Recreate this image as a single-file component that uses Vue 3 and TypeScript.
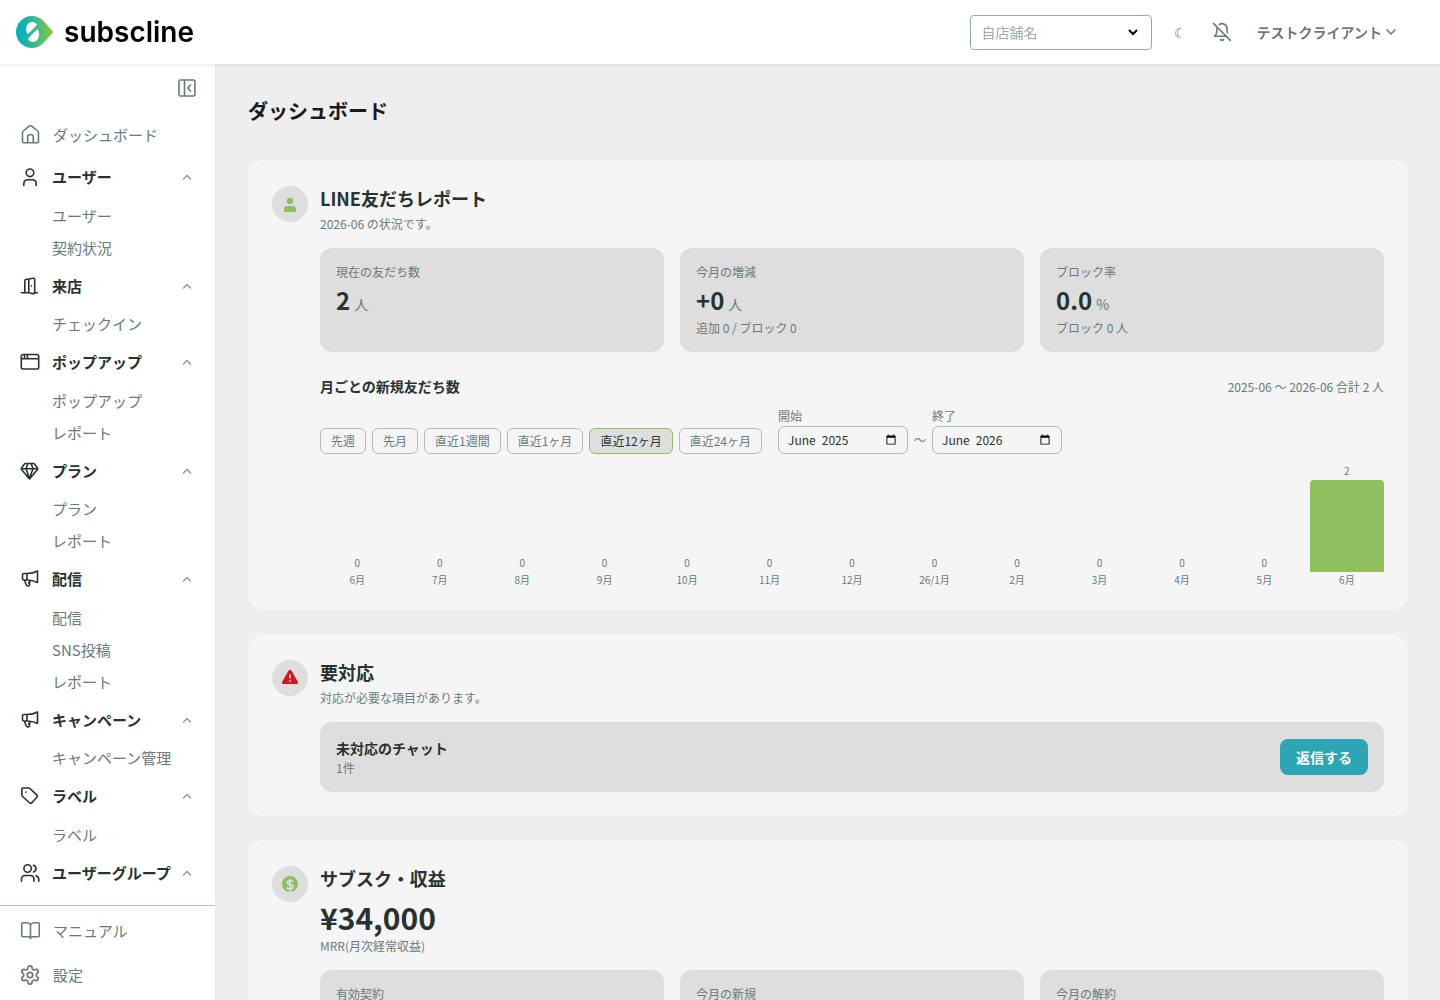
<script setup lang="ts">
import { ref, computed } from 'vue'

interface NavGroup {
  label: string
  icon: string
  children: string[]
}

const megaphone =
  'M7 4.500H4Q2.500 4.500 2.500 6V9.500Q2.500 11 4 11H7M7 4.500V11M7 4.500Q13 4.500 17.500 2V13.500Q13 11 7 11M4.500 11L6 15.500Q6.500 17 8 17Q9.800 17 9.500 15.200L8.600 13.800L10 13.200L9.200 11.400'

const icons: Record<string, string> = {
  home: 'M2.500 7.700Q2.500 6.700 3.300 6L9.200 1.200Q10.500 .300 11.800 1.200L17.700 6Q18.500 6.700 18.500 7.700V16Q18.500 17.700 16.800 17.700H4.200Q2.500 17.700 2.500 16ZM7.700 17.500V11.500Q7.700 9.700 9.500 9.700H11.500Q13.300 9.700 13.300 11.500V17.500',
  user: 'M13.800 5.800a3.800 3.800 0 1 1-7.600 0a3.800 3.800 0 0 1 7.600 0M3.800 18.500V17Q3.800 12.800 8 12.800H12Q16.200 12.800 16.200 17V18.500',
  door: 'M1.500 16.700H9M4.800 16.700V5Q4.800 3.300 6.500 3.300H8.800M8.800 4.200Q8.800 3 10 2.700L13 2.200Q14.700 2 14.700 3.700V16Q14.700 17.800 13 17.600L10.300 17.200Q8.800 17 8.800 15.500ZM14.700 16.700H17.300M11.500 9.800V10',
  window: 'M3 2.500H17Q18.700 2.500 18.700 4.200V15.300Q18.700 17 17 17H3Q1.300 17 1.300 15.300V4.200Q1.300 2.500 3 2.500ZM1.300 6.700H18.700M4.500 2.500V6.700M7.500 2.500V6.700',
  diamond: 'M5.500 2.500H13.500Q14.300 2.500 14.800 3.200L17.600 7.200Q17.900 7.800 17.500 8.500L9.500 18L1.500 8.500Q1.100 7.800 1.500 7.200L4.200 3.200Q4.700 2.500 5.500 2.500ZM1.500 7.800H17.500M7.800 2.500L6 7.800L9.500 17.500L13 7.800L11.200 2.500',
  megaphone,
  tag: 'M3 2H8.500Q9.500 2 10.200 2.700L17.100 9.400Q17.800 10.200 17.100 11L11.500 17Q10.700 17.800 9.800 17L2.600 10.500Q1.800 9.800 1.800 8.800V3.200Q1.800 2 3 2ZM6 6V6.200',
  users: 'M11.300 5.500a3.700 3.700 0 1 1-7.400 0a3.700 3.700 0 0 1 7.400 0M1.500 18.200V16.500Q1.500 12.500 5.500 12.500H10Q14 12.500 14 16.500V18.200M13.500 2.200Q16 3 16 5.500Q16 8 13.500 9M16 12.700Q18.800 13.700 18.800 16.500V18.200',
  book: 'M10.500 4Q9.500 1.800 7 1.800H3Q1.700 1.800 1.700 3.100V14.500Q1.700 15.800 3 15.800H8.500Q10.500 15.800 10.500 17.800V4Q11.500 1.800 14 1.800H18Q19.300 1.800 19.300 3.100V14.500Q19.300 15.800 18 15.800H12.500Q10.500 15.800 10.500 17.800',
}

const groups: NavGroup[] = [
  { label: 'ユーザー', icon: 'user', children: ['ユーザー', '契約状況'] },
  { label: '来店', icon: 'door', children: ['チェックイン'] },
  { label: 'ポップアップ', icon: 'window', children: ['ポップアップ', 'レポート'] },
  { label: 'プラン', icon: 'diamond', children: ['プラン', 'レポート'] },
  { label: '配信', icon: 'megaphone', children: ['配信', 'SNS投稿', 'レポート'] },
  { label: 'キャンペーン', icon: 'megaphone', children: ['キャンペーン管理'] },
  { label: 'ラベル', icon: 'tag', children: ['ラベル'] },
  { label: 'ユーザーグループ', icon: 'users', children: [] },
]

const friendStats = [
  { label: '現在の友だち数', value: '2', unit: '人', note: '' },
  { label: '今月の増減', value: '+0', unit: '人', note: '追加 0 / ブロック 0' },
  { label: 'ブロック率', value: '0.0', unit: '%', note: 'ブロック 0 人' },
]

const revenueStats = ['有効契約', '今月の新規', '今月の解約']

const ranges = ['先週', '先月', '直近1週間', '直近1ヶ月', '直近12ヶ月', '直近24ヶ月']
const activeRange = ref('直近12ヶ月')
const startMonth = ref('2025-06')
const endMonth = ref('2026-06')
const store = ref('')

const monthNames = [
  'January', 'February', 'March', 'April', 'May', 'June',
  'July', 'August', 'September', 'October', 'November', 'December',
]
// Splits "2025-06" into the month name and year shown in the field.
function monthParts(value: string): string[] {
  const [year, month] = value.split('-')
  return year && month ? [monthNames[Number(month) - 1], year] : []
}

const months = [
  { label: '6月', count: 0 },
  { label: '7月', count: 0 },
  { label: '8月', count: 0 },
  { label: '9月', count: 0 },
  { label: '10月', count: 0 },
  { label: '11月', count: 0 },
  { label: '12月', count: 0 },
  { label: '26/1月', count: 0 },
  { label: '2月', count: 0 },
  { label: '3月', count: 0 },
  { label: '4月', count: 0 },
  { label: '5月', count: 0 },
  { label: '6月', count: 2 },
]
const peak = computed(() => Math.max(...months.map((m) => m.count), 1))
const barHeight = (count: number) => `${Math.round((count / peak.value) * 92)}px`
</script>

<template>
  <div class="app">
    <header class="topbar">
      <a href="#" class="logo" aria-label="subscline">
        <svg width="38" height="32" viewBox="0 0 38 32" aria-hidden="true">
          <defs>
            <linearGradient id="brand" x1="0" y1="0" x2="1" y2="0">
              <stop offset="0.1" stop-color="#00b2b8" />
              <stop offset="0.55" stop-color="#42b98a" />
              <stop offset="1" stop-color="#8cc63f" />
            </linearGradient>
          </defs>
          <path d="M16 0Q22 0 27 4.500L36.300 14.500Q37.700 16 36.300 17.500L27 27.500Q22 32 16 32A16 16 0 0 1 16 0Z" fill="url(#brand)" />
          <path d="M11.800 18.300C8.500 14.500 10 6 16 6Q19.800 6 21 9Z" fill="#fff" />
          <path d="M21.300 13.300C25 17 22.800 26 17 26Q13.300 26 12 22.600Z" fill="#fff" />
        </svg>
        <span>subscline</span>
      </a>
      <div class="tools">
        <div class="store">
          <select v-model="store" aria-label="自店舗名">
            <option value="">自店舗名</option>
          </select>
          <svg width="12" height="8" viewBox="0 0 12 8" aria-hidden="true"><path d="M2 2l4 4 4-4" /></svg>
        </div>
        <button type="button" class="tool moon" aria-label="ダークモード">☾</button>
        <button type="button" class="tool bell" aria-label="通知">
          <svg class="line scaled" width="20" height="20" viewBox="0 0 24 24">
            <path d="M8.700 3A6 6 0 0 1 18 8a21.300 21.300 0 0 0 .600 5M17 17H3s3-2 3-9a4.670 4.670 0 0 1 .300-1.700M10.300 21a1.940 1.940 0 0 0 3.400 0M2 2l20 20" />
          </svg>
        </button>
        <button type="button" class="account">
          テストクライアント
          <svg class="line" width="10" height="8" viewBox="0 0 10 8"><path d="M1 2l4 4 4-4" /></svg>
        </button>
      </div>
    </header>

    <div class="body">
      <aside class="sidebar">
        <div class="collapse">
          <button type="button" aria-label="メニューを閉じる">
            <svg class="line" width="20" height="20" viewBox="0 0 20 20">
              <path d="M3.500 2H16.500Q18 2 18 3.500V16.500Q18 18 16.500 18H3.500Q2 18 2 16.500V3.500Q2 2 3.500 2ZM7.500 2V18M13.500 7L10.800 10L13.500 13" />
            </svg>
          </button>
        </div>
        <nav class="nav">
          <a href="#" class="link home">
            <svg class="line" width="20" height="20" viewBox="0 0 20 20"><path :d="icons.home" /></svg>
            ダッシュボード
          </a>
          <section v-for="group in groups" :key="group.label">
            <button type="button" class="group" aria-expanded="true">
              <svg class="line" width="20" height="20" viewBox="0 0 20 20"><path :d="icons[group.icon]" /></svg>
              <span>{{ group.label }}</span>
              <svg class="line caret" width="10" height="8" viewBox="0 0 10 8"><path d="M1.500 6L5 2.500L8.500 6" /></svg>
            </button>
            <a v-for="child in group.children" :key="child" href="#" class="child">{{ child }}</a>
          </section>
        </nav>
        <div class="footer">
          <a href="#" class="link">
            <svg class="line" width="20" height="20" viewBox="0 0 20 20"><path :d="icons.book" /></svg>
            マニュアル
          </a>
          <a href="#" class="link">
            <svg class="line scaled" width="20" height="20" viewBox="1 1 22 22">
              <path d="M12.220 2h-.440a2 2 0 0 0-2 2v.180a2 2 0 0 1-1 1.730l-.430.250a2 2 0 0 1-2 0l-.150-.080a2 2 0 0 0-2.730.730l-.220.380a2 2 0 0 0 .730 2.730l.150.100a2 2 0 0 1 1 1.720v.510a2 2 0 0 1-1 1.740l-.150.090a2 2 0 0 0-.730 2.730l.220.380a2 2 0 0 0 2.730.730l.150-.080a2 2 0 0 1 2 0l.430.250a2 2 0 0 1 1 1.730V20a2 2 0 0 0 2 2h.440a2 2 0 0 0 2-2v-.180a2 2 0 0 1 1-1.730l.430-.250a2 2 0 0 1 2 0l.150.080a2 2 0 0 0 2.730-.730l.220-.390a2 2 0 0 0-.730-2.730l-.150-.080a2 2 0 0 1-1-1.740v-.500a2 2 0 0 1 1-1.740l.150-.090a2 2 0 0 0 .730-2.730l-.220-.380a2 2 0 0 0-2.730-.730l-.150.080a2 2 0 0 1-2 0l-.430-.250a2 2 0 0 1-1-1.730V4a2 2 0 0 0-2-2z" />
              <circle cx="12" cy="12" r="3" />
            </svg>
            設定
          </a>
        </div>
      </aside>

      <main class="main">
        <h1>ダッシュボード</h1>

        <section class="card">
          <div class="badge green">
            <svg width="20" height="20" viewBox="0 0 20 20"><circle cx="10" cy="7" r="3.200" /><path d="M4 15Q4 12 8 12H12Q16 12 16 15V17Q16 18 15 18H5Q4 18 4 17Z" /></svg>
          </div>
          <div class="content">
            <h2>LINE友だちレポート</h2>
            <p class="lead">2026-06 の状況です。</p>
            <div class="stats">
              <div v-for="stat in friendStats" :key="stat.label" class="stat">
                <p>{{ stat.label }}</p>
                <p class="value"><strong>{{ stat.value }}</strong> {{ stat.unit }}</p>
                <p v-if="stat.note">{{ stat.note }}</p>
              </div>
            </div>

            <div class="chart-head">
              <h3>月ごとの新規友だち数</h3>
              <p>2025-06 〜 2026-06 合計 2 人</p>
            </div>
            <div class="filters">
              <div class="ranges">
                <button
                  v-for="range in ranges"
                  :key="range"
                  type="button"
                  :class="{ active: range === activeRange }"
                  @click="activeRange = range"
                >{{ range }}</button>
              </div>
              <div class="period">
                <div class="field">
                  <label for="start-month">開始</label>
                  <div class="month">
                    <input id="start-month" v-model="startMonth" type="month" />
                    <div class="shown"><span v-for="part in monthParts(startMonth)" :key="part">{{ part }}</span></div>
                  </div>
                </div>
                <span class="tilde">〜</span>
                <div class="field">
                  <label for="end-month">終了</label>
                  <div class="month">
                    <input id="end-month" v-model="endMonth" type="month" />
                    <div class="shown"><span v-for="part in monthParts(endMonth)" :key="part">{{ part }}</span></div>
                  </div>
                </div>
              </div>
            </div>
            <div class="chart">
              <div v-for="(month, i) in months" :key="i" class="column">
                <span class="count">{{ month.count }}</span>
                <div class="bar" :style="{ height: barHeight(month.count) }"></div>
                <span>{{ month.label }}</span>
              </div>
            </div>
          </div>
        </section>

        <section class="card">
          <div class="badge red">
            <svg width="20" height="20" viewBox="0 0 20 20"><path d="M8.500 2.700Q10 .600 11.500 2.700L17.800 13.700Q18.500 16 16.500 16H3.500Q1.500 16 2.200 13.700Z" /><path class="cut" d="M10 6.500V10.500M10 12.300V14" /></svg>
          </div>
          <div class="content">
            <h2>要対応</h2>
            <p class="lead">対応が必要な項目があります。</p>
            <div class="task">
              <div>
                <h3>未対応のチャット</h3>
                <p>1件</p>
              </div>
              <button type="button">返信する</button>
            </div>
          </div>
        </section>

        <section class="card">
          <div class="badge green">
            <svg width="20" height="20" viewBox="0 0 20 20"><circle cx="10" cy="10" r="8" /><path class="cut" d="M13 8.200Q12.600 6.700 10 6.700Q7.300 6.700 7.300 8.500Q7.300 10.100 10 10.600Q13 11.100 13 13Q13 15 10 15Q7.300 15 7 13.300M10 4.800V18" /></svg>
          </div>
          <div class="content">
            <h2>サブスク・収益</h2>
            <p class="amount">¥34,000</p>
            <p class="lead">MRR(月次経常収益)</p>
            <div class="stats">
              <div v-for="label in revenueStats" :key="label" class="stat tall">
                <p>{{ label }}</p>
              </div>
            </div>
          </div>
        </section>
      </main>
    </div>
  </div>
</template>

<style>
body {
  margin: 0;
}
</style>

<style scoped>
.app {
  --ink: #263332;
  --muted: #687b7a;
  --line: #adc0be;
  --tile: #dedede;
  --green: #8fbf5f;
  display: flex;
  flex-direction: column;
  height: 100vh;
  color: var(--ink);
  font-family: "Noto Sans CJK JP", sans-serif;
  font-size: 15px;
  line-height: 1.5;
}
.app * {
  box-sizing: border-box;
}
h1, h2, h3, p {
  margin: 0;
}
a {
  color: inherit;
  text-decoration: none;
}
button {
  margin: 0;
  padding: 0;
  border: 0;
  background: none;
  color: inherit;
  font: inherit;
  cursor: pointer;
}
svg {
  flex: none;
}
.line {
  fill: none;
  stroke: currentColor;
  stroke-width: 1.6;
  stroke-linecap: round;
  stroke-linejoin: round;
}
.scaled {
  stroke-width: 1.9;
}

.topbar {
  position: relative;
  z-index: 1;
  flex: none;
  display: flex;
  align-items: center;
  justify-content: space-between;
  height: 64px;
  padding: 0 44px 0 16px;
  background: #fff;
  box-shadow: 0 1px 4px rgba(0, 0, 0, 0.1);
}
.logo {
  display: flex;
  align-items: center;
  gap: 10px;
  color: #000;
  font-family: Inter, sans-serif;
  font-size: 28px;
  font-weight: 600;
  line-height: 32px;
}
.tools {
  display: flex;
  align-items: center;
  color: var(--muted);
}
.store {
  display: grid;
  align-items: center;
  width: 182px;
  margin-right: 17px;
}
.store select {
  grid-area: 1 / 1;
  height: 35px;
  padding: 0 11px;
  border: 1px solid #94abab;
  border-radius: 4px;
  background: #fff;
  color: #9aafaf;
  font: inherit;
  font-size: 14px;
  appearance: none;
}
.store svg {
  grid-area: 1 / 1;
  justify-self: end;
  margin-right: 13px;
  fill: none;
  stroke: #000;
  stroke-width: 2;
  pointer-events: none;
}
.tool {
  display: flex;
  align-items: center;
  justify-content: center;
  width: 24px;
  height: 24px;
}
.moon {
  margin-right: 17px;
  font-size: 14px;
}
.bell {
  margin-right: 23px;
}
.account {
  display: flex;
  align-items: center;
  gap: 4px;
  font-size: 14px;
  font-weight: 700;
}

.body {
  flex: 1;
  display: flex;
  min-height: 0;
}
.sidebar {
  flex: none;
  display: flex;
  flex-direction: column;
  width: 216px;
  border-right: 1px solid #e8e8e8;
  background: #fff;
}
.collapse {
  flex: none;
  display: flex;
  align-items: center;
  justify-content: flex-end;
  height: 48px;
  padding-right: 18px;
  color: var(--muted);
}
.collapse button {
  display: flex;
}
.nav {
  flex: 1;
  min-height: 0;
  overflow-y: auto;
  scrollbar-width: none;
}
.link {
  display: flex;
  align-items: center;
  gap: 13px;
  height: 44px;
  padding-left: 20px;
  color: var(--muted);
}
.home {
  height: 43px;
  padding-top: 3px;
}
.group {
  display: flex;
  align-items: center;
  gap: 12px;
  width: 100%;
  padding: 11px 23px 11px 20px;
  font-weight: 700;
  text-align: left;
}
.group span {
  flex: 1;
  white-space: nowrap;
}
.caret {
  color: #8c9393;
  stroke-width: 1.3;
}
.group .caret {
  margin-left: -12px;
}
.child {
  display: flex;
  align-items: center;
  height: 32px;
  padding-top: 1px;
  padding-left: 52px;
  color: var(--muted);
}
.footer {
  flex: none;
  padding: 3px 0;
  border-top: 1px solid var(--line);
}

.main {
  flex: 1;
  min-width: 0;
  padding: 32px;
  overflow-y: auto;
  scrollbar-width: none;
  background: #eee;
}
h1 {
  margin-bottom: 34px;
  color: #1a1a1a;
  font-size: 20px;
  line-height: 30px;
}
.card {
  display: flex;
  gap: 12px;
  margin-bottom: 24px;
  padding: 24px;
  border-radius: 16px;
  background: #f5f5f5;
}
.badge {
  flex: none;
  display: flex;
  align-items: center;
  justify-content: center;
  width: 36px;
  height: 36px;
  margin-top: 2px;
  border-radius: 50%;
  background: var(--tile);
}
.green {
  fill: var(--green);
}
.red {
  fill: #d1161d;
}
.cut {
  fill: none;
  stroke: var(--tile);
  stroke-width: 1.7;
}
.content {
  flex: 1;
  min-width: 0;
}
h2 {
  margin-bottom: 4px;
  font-size: 18px;
  line-height: 28px;
}
h3 {
  font-size: 14px;
  line-height: 20px;
}
.lead {
  margin-bottom: 16px;
  color: var(--muted);
  font-size: 12px;
  line-height: 16px;
}
.stats {
  display: grid;
  grid-template-columns: repeat(3, 1fr);
  gap: 16px;
}
.stat {
  padding: 16px;
  border-radius: 12px;
  background: var(--tile);
  color: var(--muted);
  font-size: 12px;
  line-height: 16px;
}
.tall {
  min-height: 104px;
}
.stat .value {
  display: flex;
  align-items: baseline;
  gap: 4px;
  height: 40px;
  font-size: 14px;
  line-height: 40px;
}
.value strong {
  color: var(--ink);
  font-size: 24px;
}
.amount {
  font-size: 30px;
  font-weight: 700;
  line-height: 42px;
}
.chart-head {
  display: flex;
  align-items: baseline;
  justify-content: space-between;
  margin-top: 24px;
}
.chart-head p {
  color: var(--muted);
  font-size: 12px;
  line-height: 16px;
}
.filters {
  display: flex;
  flex-wrap: wrap;
  align-items: flex-end;
  gap: 16px;
  margin-top: 12px;
  color: var(--muted);
  font-size: 12px;
  line-height: 16px;
}
.ranges {
  display: flex;
  gap: 6px;
}
.ranges button {
  height: 26px;
  padding: 0 10px;
  border: 1px solid var(--line);
  border-radius: 6px;
}
.ranges .active {
  border-color: var(--green);
  background: var(--tile);
  color: var(--ink);
}
.period {
  display: flex;
  align-items: flex-end;
  gap: 6px;
}
.field {
  display: flex;
  flex-direction: column;
  gap: 2px;
}
.tilde {
  line-height: 28px;
}
.month {
  display: grid;
  align-items: center;
  width: 130px;
}
.month input {
  grid-area: 1 / 1;
  width: 100%;
  height: 28px;
  margin: 0;
  padding: 0 8px;
  border: 1px solid var(--line);
  border-radius: 6px;
  background: transparent;
  color: var(--ink);
  font: inherit;
}
.month input::-webkit-datetime-edit {
  opacity: 0;
}
.shown {
  grid-area: 1 / 1;
  display: flex;
  gap: 6px;
  padding-left: 10px;
  color: var(--ink);
  pointer-events: none;
}
.chart {
  display: flex;
  align-items: flex-end;
  gap: 8px;
  height: 122px;
  margin-top: 10px;
}
.column {
  flex: 1;
  display: flex;
  flex-direction: column;
  gap: 2px;
  min-width: 0;
  color: var(--muted);
  font-size: 10px;
  line-height: 12px;
  text-align: center;
}
.count {
  line-height: 14px;
}
.bar {
  border-radius: 4px 4px 0 0;
  background: var(--green);
}
.task {
  display: flex;
  align-items: center;
  justify-content: space-between;
  padding: 16px;
  border-radius: 12px;
  background: var(--tile);
}
.task h3 {
  margin-bottom: 2px;
}
.task p {
  color: var(--muted);
  font-size: 12px;
  line-height: 16px;
}
.task button {
  height: 36px;
  padding: 0 16px;
  border-radius: 8px;
  background: #2ca5b5;
  color: #fff;
  font-size: 14px;
  font-weight: 700;
}
</style>
